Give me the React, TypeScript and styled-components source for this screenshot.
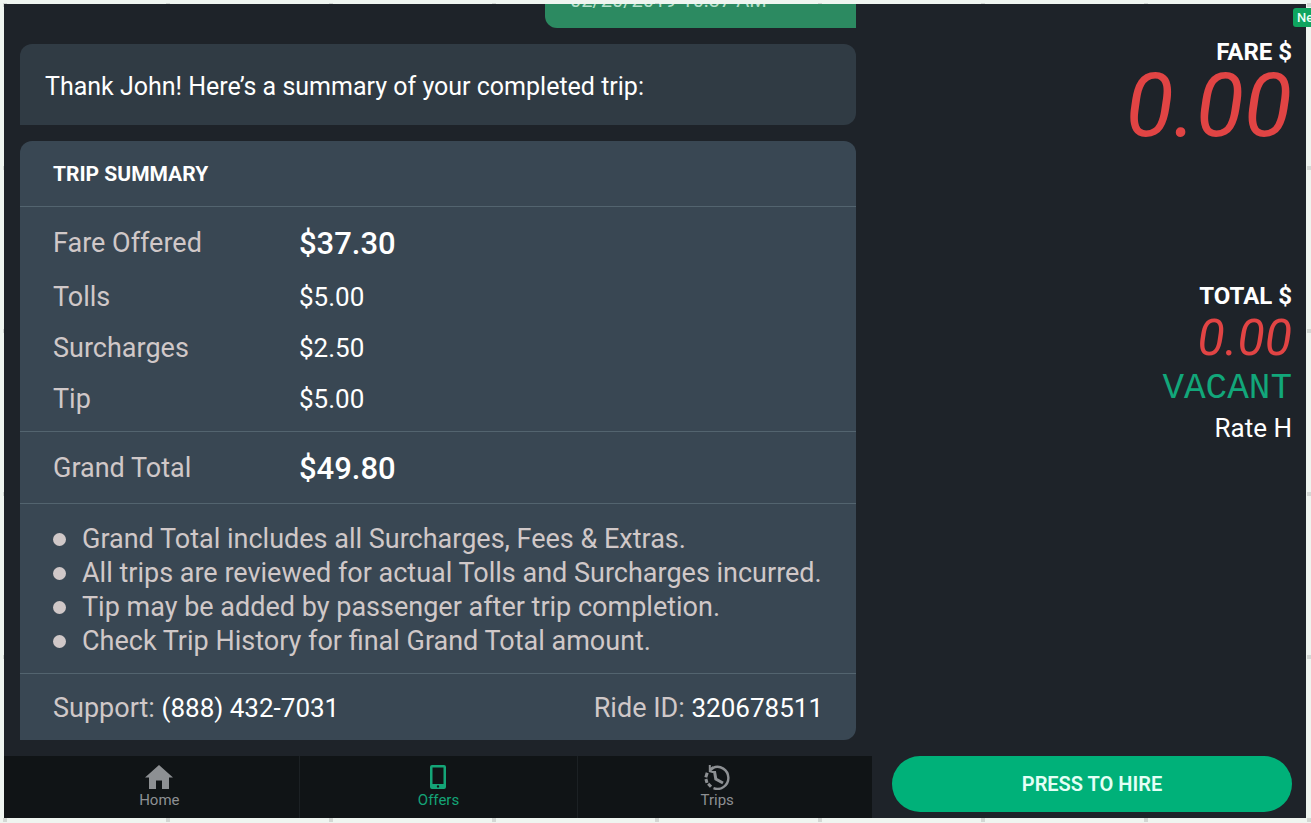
import React from "react";
import styled, { createGlobalStyle } from "styled-components";

const GlobalStyle = createGlobalStyle`
  *, *::before, *::after { box-sizing: border-box; }
  html, body, #root { height: 100%; }
  body { margin: 0; font-family: Roboto, "Liberation Sans", sans-serif; background: #eff5f0; }
  h2, p, dl, dd, ul { margin: 0; padding: 0; }
`;

const Page = styled.div`
  position: relative;
  height: 100%;
  min-height: 600px;
  padding: 4px 5px 5px 4px;
  overflow: hidden;
  background-color: #eff5f0;
  background-image: conic-gradient(from 90deg at 159px 159px, #d3d8d4 25%, transparent 0);
  background-size: 163px 163px;
  background-position: 7px 7px;
`;

const Device = styled.main`
  display: grid;
  grid-template-columns: 2fr 1fr;
  height: 100%;
  background: #1e2329;
  color: #fff;
`;

const TripPane = styled.div`
  display: flex;
  flex-direction: column;
  min-width: 0;
  min-height: 0;
`;

const Chat = styled.section`
  flex: 1;
  min-height: 0;
  display: flex;
  flex-direction: column;
  justify-content: flex-end;
  gap: 16px;
  padding: 0 16px 16px;
  overflow: hidden;
`;

const Bubble = styled.div<{ $sent?: boolean }>`
  flex: none;
  display: flex;
  align-items: ${(p) => (p.$sent ? "flex-start" : "center")};
  align-self: ${(p) => (p.$sent ? "flex-end" : "stretch")};
  width: ${(p) => (p.$sent ? "311px" : "auto")};
  height: 81px;
  padding: ${(p) => (p.$sent ? "41px 25px 0" : "4px 25px 0")};
  border-radius: ${(p) => (p.$sent ? "12px 12px 0 12px" : "12px 12px 12px 0")};
  background: ${(p) => (p.$sent ? "#2c8a61" : "#303b44")};
  font-size: 25px;
  line-height: 32px;
`;

const Stamp = styled.time`
  font-size: 20px;
  line-height: 24px;
  color: #b5e0cb;
`;

const Card = styled.article`
  flex: none;
  border-radius: 12px 12px 12px 0;
  background: #394753;
  color: #d0c8c8;
  font-size: 27px;
`;

const CardTitle = styled.h2`
  padding: 2px 33px 0;
  font-size: 21px;
  font-weight: 700;
  line-height: 63px;
  color: #fff;
`;

const Section = styled.dl`
  padding: 8px 33px 7px;
  border-top: 1px solid #53646f;
`;

const Row = styled.div<{ $strong?: boolean }>`
  display: flex;
  align-items: center;
  height: ${(p) => (p.$strong ? "56px" : "51px")};

  dt { width: 246px; }
  dd {
    color: #fff;
    font-size: ${(p) => (p.$strong ? "31px" : "26px")};
    font-weight: ${(p) => (p.$strong ? 500 : 400)};
  }
`;

const Notes = styled.ul`
  padding: 18px 33px 15px;
  border-top: 1px solid #53646f;
  list-style: none;
`;

const Note = styled.li`
  display: flex;
  align-items: center;
  gap: 16px;
  line-height: 34px;

  &::before {
    content: "";
    flex: none;
    width: 13px;
    height: 13px;
    border-radius: 50%;
    background: #d0c8c8;
  }
`;

const CardFooter = styled.footer`
  display: flex;
  justify-content: space-between;
  padding: 2px 33px 0;
  border-top: 1px solid #53646f;
  line-height: 64px;

  span, a { color: #fff; font-size: 26px; text-decoration: none; }
`;

const Nav = styled.nav`
  flex: none;
  display: grid;
  grid-template-columns: repeat(3, 1fr);
  height: 62px;
  padding: 0 16px;
  background: #101416;
`;

const NavLink = styled.a<{ $active?: boolean }>`
  display: flex;
  flex-direction: column;
  align-items: center;
  padding-top: 8px;
  font-size: 15px;
  line-height: 20px;
  text-decoration: none;
  color: ${(p) => (p.$active ? "#14a577" : "#8d9093")};

  & + & { border-left: 1px solid #1c2124; }
  svg { display: block; }
`;

const MeterPane = styled.aside`
  display: flex;
  flex-direction: column;
  align-items: flex-end;
  padding: 32px 14px 6px 20px;
`;

const Meter = styled.section`
  display: flex;
  flex-direction: column;
  align-items: flex-end;
`;

const Label = styled.h2`
  font-size: 24px;
  font-weight: 700;
  line-height: 32px;
`;

const Digits = styled.output<{ $large?: boolean }>`
  font-style: italic;
  font-size: ${(p) => (p.$large ? "88px" : "50px")};
  line-height: ${(p) => (p.$large ? "76px" : "52px")};
  color: #e14444;
`;

const Status = styled.p`
  font-family: "Liberation Mono", monospace;
  font-size: 36px;
  line-height: 50px;
  color: #12a77a;
`;

const Rate = styled.p`
  font-size: 26px;
  line-height: 28px;
`;

const TotalMeter = styled(Meter)`
  margin-top: 136px;
`;

const HireButton = styled.button`
  width: 100%;
  height: 56px;
  margin-top: auto;
  border: 0;
  border-radius: 28px;
  background: #00b179;
  color: #e4fff6;
  font: 600 20px/24px Roboto, sans-serif;
`;

const NewBadge = styled.span`
  position: absolute;
  top: 8px;
  left: calc(100% - 18px);
  padding: 0 4px;
  border-radius: 3px;
  background: #0fa55f;
  color: #e9fff4;
  font-size: 13px;
  font-weight: 500;
  line-height: 19px;
`;

const HomeIcon = () => (
  <svg width="28" height="26" viewBox="0 0 28 26" fill="currentColor" aria-hidden="true">
    <path d="M14 1 28 13.500H24V25H17V16.500H11V25H4V13.500H0Z" />
  </svg>
);

const TabletIcon = () => (
  <svg width="16" height="26" viewBox="0 0 16 26" aria-hidden="true">
    <path
      fill="currentColor"
      fillRule="evenodd"
      d="M2 1H14A2 2 0 0 1 16 3V23A2 2 0 0 1 14 25H2A2 2 0 0 1 0 23V3A2 2 0 0 1 2 1ZM2.500 3.500V20H13.500V3.500ZM8 21.200A1.200 1.200 0 1 0 8 23.600 1.200 1.200 0 0 0 8 21.200Z"
    />
  </svg>
);

const HistoryIcon = () => (
  <svg width="26" height="26" viewBox="0 0 26 26" fill="none" stroke="currentColor" aria-hidden="true">
    <path d="M9 3.800A11 11 0 1 1 9.500 24.200" strokeWidth="2.400" />
    <path d="M7 22.800 4.200 19.800M3 18.800 1.900 15M1.800 13.400 3.200 8.800" strokeWidth="3" />
    <path d="M5.800 1V7.200L8.500 8H12" strokeWidth="2" />
    <path d="M5.800 6 9.500 3.500M10.500 7.500 11.800 15 19 19" strokeWidth="3" />
  </svg>
);

const fares = [
  { name: "Fare Offered", amount: "$37.30", strong: true },
  { name: "Tolls", amount: "$5.00" },
  { name: "Surcharges", amount: "$2.50" },
  { name: "Tip", amount: "$5.00" },
];

const notes = [
  "Grand Total includes all Surcharges, Fees & Extras.",
  "All trips are reviewed for actual Tolls and Surcharges incurred.",
  "Tip may be added by passenger after trip completion.",
  "Check Trip History for final Grand Total amount.",
];

export default function App() {
  return (
    <Page>
      <GlobalStyle />
      <Device>
        <TripPane>
          <Chat>
            <Bubble $sent>
              <Stamp>02/20/2019 10:37 AM</Stamp>
            </Bubble>
            <Bubble>
              <p>Thank John! Here’s a summary of your completed trip:</p>
            </Bubble>
            <Card>
              <CardTitle>TRIP SUMMARY</CardTitle>
              <Section>
                {fares.map((f) => (
                  <Row key={f.name} $strong={f.strong}>
                    <dt>{f.name}</dt>
                    <dd>{f.amount}</dd>
                  </Row>
                ))}
              </Section>
              <Section>
                <Row $strong>
                  <dt>Grand Total</dt>
                  <dd>$49.80</dd>
                </Row>
              </Section>
              <Notes>
                {notes.map((n) => (
                  <Note key={n}>{n}</Note>
                ))}
              </Notes>
              <CardFooter>
                <p>
                  Support: <a href="tel:8884327031">(888) 432-7031</a>
                </p>
                <p>
                  Ride ID: <span>320678511</span>
                </p>
              </CardFooter>
            </Card>
          </Chat>
          <Nav>
            <NavLink href="#home"><HomeIcon />Home</NavLink>
            <NavLink href="#offers" $active><TabletIcon />Offers</NavLink>
            <NavLink href="#trips"><HistoryIcon />Trips</NavLink>
          </Nav>
        </TripPane>
        <MeterPane>
          <Meter>
            <Label>FARE $</Label>
            <Digits $large>0.00</Digits>
          </Meter>
          <TotalMeter>
            <Label>TOTAL $</Label>
            <Digits>0.00</Digits>
            <Status>VACANT</Status>
            <Rate>Rate H</Rate>
          </TotalMeter>
          <HireButton type="button">PRESS TO HIRE</HireButton>
        </MeterPane>
      </Device>
      <NewBadge>New</NewBadge>
    </Page>
  );
}
